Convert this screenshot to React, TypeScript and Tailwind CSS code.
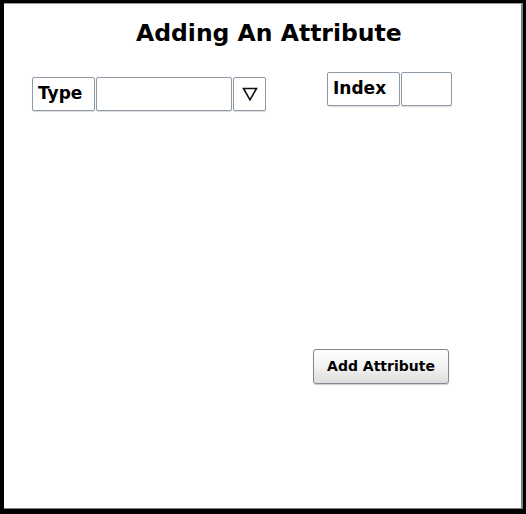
import React from "react";

const font = { fontFamily: '"DejaVu Sans", Verdana, sans-serif' };

export default function App() {
  return (
    <div className="w-[526px] h-[514px] bg-black pt-[3px] pl-[4px] pr-[3px] pb-[5px]" style={font}>
      <div className="w-full h-full bg-white border-t border-[#9a9a9a] border-r-2 border-b border-r-[#808080] border-b-[#808080] flex flex-col">
        <div className="pl-[132px] pt-[14px] h-[52px] text-[23.5px] leading-[30px] font-bold text-black">
          Adding An Attribute
        </div>
        <div className="flex items-start mt-[16px]">
          <div className="flex ml-[28px] mt-[5px]">
            <div className="w-[63px] h-[34px] border border-[#8e9aa6] rounded-[2px] bg-white flex items-center pl-[5px] text-[17px] font-bold text-black shadow-[0_1px_1px_rgba(0,0,0,0.15)]">
              Type
            </div>
            <div className="w-[136px] h-[34px] border border-[#8e9aa6] rounded-[2px] bg-white ml-[1px] shadow-[0_1px_1px_rgba(0,0,0,0.15)]" />
            <div className="w-[33px] h-[34px] border border-[#8e9aa6] rounded-[2px] bg-white ml-[1px] flex items-center justify-center shadow-[0_1px_1px_rgba(0,0,0,0.15)]">
              <svg width="16" height="14" viewBox="0 0 16 14">
                <path d="M1.5 1.5 H14.5 L8 12.8 Z" fill="none" stroke="#111" strokeWidth="1.6" strokeLinejoin="miter" />
              </svg>
            </div>
          </div>
          <div className="flex ml-[61px]">
            <div className="w-[73px] h-[34px] border border-[#8e9aa6] rounded-[2px] bg-white flex items-center pl-[5px] text-[17px] font-bold text-black shadow-[0_1px_1px_rgba(0,0,0,0.15)]">
              Index
            </div>
            <div className="w-[51px] h-[34px] border border-[#8e9aa6] rounded-[2px] bg-white ml-[1px] shadow-[0_1px_1px_rgba(0,0,0,0.15)]" />
          </div>
        </div>
        <div className="flex justify-end pr-[72px] mt-[238px]">
          <button className="w-[136px] h-[35px] border border-[#7f8a94] rounded-[3px] bg-gradient-to-b from-white via-[#f3f3f3] to-[#dcdcdc] text-[14px] font-bold text-black flex items-center justify-center shadow-[0_1px_1px_rgba(0,0,0,0.2)]">
            Add Attribute
          </button>
        </div>
      </div>
    </div>
  );
}
